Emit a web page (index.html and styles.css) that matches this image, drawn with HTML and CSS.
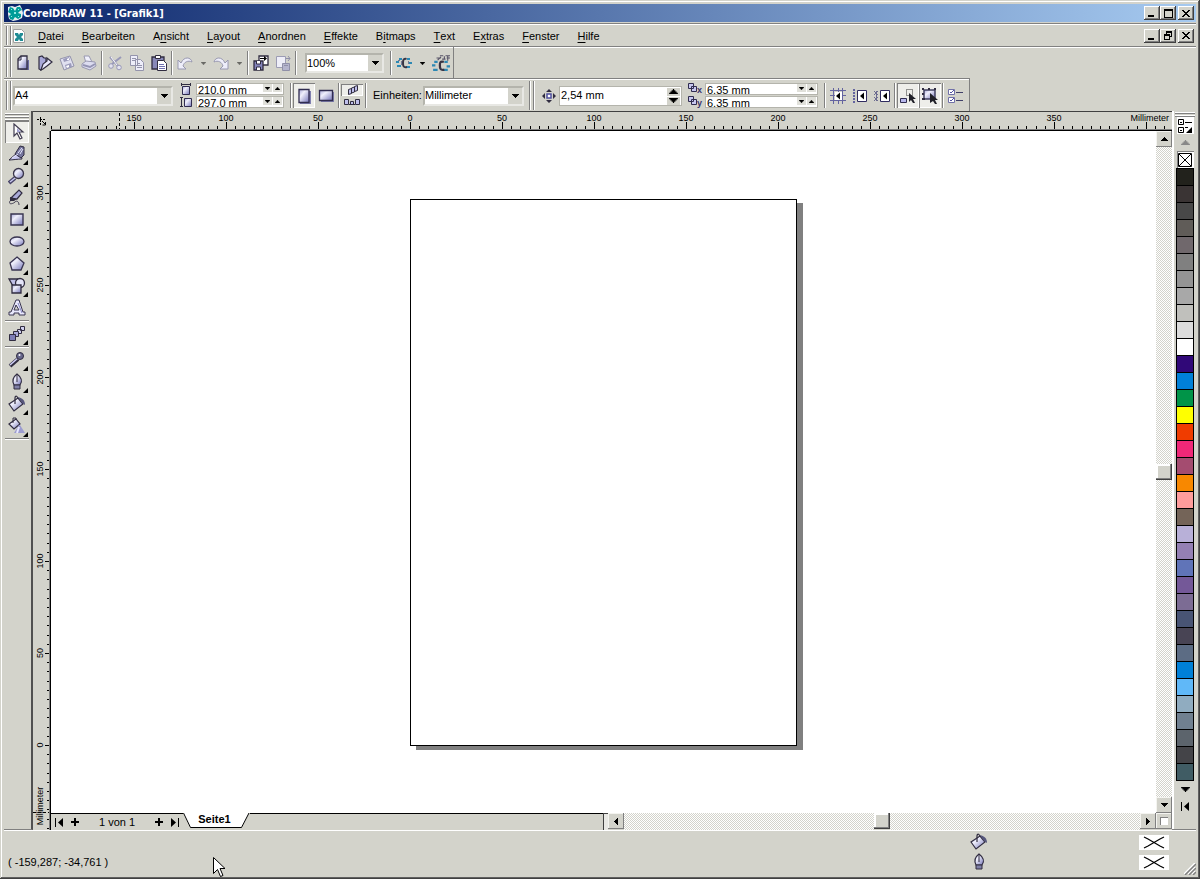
FILE: index.html
```html
<!DOCTYPE html>
<html lang="de">
<head>
<meta charset="utf-8">
<title>CorelDRAW 11 - [Grafik1]</title>
<link rel="stylesheet" href="styles.css">
</head>
<body>
<svg class="defs" width="0" height="0" aria-hidden="true">
  <defs>
    <linearGradient id="lav" x1="0" y1="0" x2="1" y2="1"><stop offset="0" stop-color="#a8a8d8"/><stop offset=".35" stop-color="#f0f0fc"/><stop offset="1" stop-color="#7474b8"/></linearGradient>
    <pattern id="hticks" x="83" y="0" width="92" height="19" patternUnits="userSpaceOnUse"><path d="M0 10h1v7h-1zM9 14h1v3h-1zM18 14h1v3h-1zM28 14h1v3h-1zM37 14h1v3h-1zM46 14h1v3h-1zM55 14h1v3h-1zM64 14h1v3h-1zM74 14h1v3h-1zM83 14h1v3h-1z"/></pattern>
    <pattern id="vticks" x="0" y="62" width="18" height="92" patternUnits="userSpaceOnUse"><path d="M12 0h4v1h-4zM14 9h2v1h-2zM14 18h2v1h-2zM14 28h2v1h-2zM14 37h2v1h-2zM14 46h2v1h-2zM14 55h2v1h-2zM14 64h2v1h-2zM14 74h2v1h-2zM14 83h2v1h-2z"/></pattern>
    <symbol id="dn" viewBox="0 0 7 4"><path d="M0 0h7v1h-1v1h-1v1h-1v1h-1v-1h-1v-1h-1v-1h-1z"/></symbol>
    <symbol id="up" viewBox="0 0 7 4"><path d="M0 4h7v-1h-1v-1h-1v-1h-1v-1h-1v1h-1v1h-1v1h-1z"/></symbol>
    <symbol id="lt" viewBox="0 0 4 7"><path d="M4 0v7h-1v-1h-1v-1h-1v-1h-1v-1h1v-1h1v-1h1v-1z"/></symbol>
    <symbol id="rt" viewBox="0 0 4 7"><path d="M0 0v7h1v-1h1v-1h1v-1h1v-1h-1v-1h-1v-1h-1v-1z"/></symbol>
    <symbol id="x" viewBox="0 0 8 7"><path d="M0 0h2v1h1v1h2v-1h1v-1h2v1h-1v1h-1v1h-1v1h1v1h1v1h1v1h-2v-1h-1v-1h-2v1h-1v1h-2v-1h1v-1h1v-1h1v-1h-1v-1h-1v-1h-1z"/></symbol>
    <symbol id="logo" viewBox="0 0 16 16"><path fill="#e8f0f0" d="M1 2l4-1 3 1 5-2 2 4 1 4-1 5-4 2-5 1-4-2-1-5z"/><path fill="#009c98" d="M3 2l3 1 2 3 2-4 3 0 2 3-2 1-2 2 3 1 0 3-3 2-3-2-2 3-3-1-1-3 2-2-3-2z"/><path fill="#90ece4" d="M7 7l2 0 0 2-2 0zM4 4l1 0 0 1-1 0zM11 11l1 0 0 1-1 0zM11 4h1v1h-1zM4 11h1v1H4z"/></symbol>
    <symbol id="doc" viewBox="0 0 12 14"><path fill="#fff" stroke="#a0a0a0" d="M.5.5h8l3 3v10h-11z"/><path fill="#208c94" d="M2 4h3l1 2 1-2h3v2L8 8l2 2v2H7L6 10l-1 2H2v-2l2-2-2-2z"/></symbol>

    <symbol id="new" viewBox="0 0 16 16"><path fill="#6c6ca0" d="M5 15h9V5h-1z"/><path fill="url(#lav)" stroke="#302c40" stroke-width="1.3" d="M3 4l3-3h6v13H3z"/><path fill="none" stroke="#302c40" d="M3 5h3V1"/></symbol>
    <symbol id="open" viewBox="0 0 16 16"><path fill="#a8a8d8" stroke="#302c40" stroke-width="1.2" d="M2 14V2l3-1 2 2h2v4l-3 4-2 4z"/><path fill="#e8e8fc" stroke="#302c40" stroke-width="1.2" d="M4 15l2-6 4-3V3l5 4-5 4-4 3z"/></symbol>
    <symbol id="save" viewBox="0 0 16 16"><path fill="#e0e0f0" stroke="#9494ac" d="M1 4l10-3 4 10-10 4z"/><path fill="#9c9cbc" d="M4 4l6-2 1 3-6 2zM6 10l6-2 1 4-6 2z"/><path fill="#fff" d="M8 4l2-1v2l-2 0zM7 11l3-1v2l-2 1z"/></symbol>
    <symbol id="print" viewBox="0 0 16 16"><path fill="#f0f0fc" stroke="#9898b0" d="M3 1h5l3 6-6 1z"/><path fill="#dcdcf0" stroke="#9898b0" d="M1 9l4-3 9 1 1 4-6 4-8-3z"/><path fill="none" stroke="#9494b4" stroke-width="2" d="M2 10l7 2 5-3"/></symbol>
    <symbol id="cut" viewBox="0 0 16 16"><path fill="none" stroke="#9898b8" stroke-width="2" d="M14 2L5 9M12 12L3 2"/><circle cx="4" cy="11" r="2.3" fill="#e4e4f0" stroke="#9898b8"/><circle cx="12" cy="12.500" r="2.300" fill="#e4e4f0" stroke="#9898b8"/><path stroke="#fff" d="M4 2l6 8"/></symbol>
    <symbol id="copy" viewBox="0 0 16 16"><g fill="#eeeefa" stroke="#9494ac"><path d="M1.500.5h7v10h-7zM6.500 4.500h5l3 3v8h-8z"/><path d="M3 3.500h4M3 5.500h3M8 8.500h3M8 10.500h5M8 12.500h5"/></g></symbol>
    <symbol id="paste" viewBox="0 0 16 16"><path fill="#8888b8" stroke="#302c40" stroke-width="1.3" d="M1 2h12v12H1z"/><path fill="#fff" stroke="#302c40" d="M4.500.5h5v3h-5zM6.500 5.500h6l3 3v7h-9z"/><path stroke="#7070b0" d="M8 9.500h5M8 11.500h6M8 13.500h6"/></symbol>
    <symbol id="undo" viewBox="0 0 16 16"><path fill="#eeeefa" stroke="#9898b0" d="M1 5v9h8l-3-3c1-4 5-6 9-4-1-5-8-6-11 1z"/></symbol>
    <symbol id="redo" viewBox="0 0 16 16"><path fill="#eeeefa" stroke="#9898b0" d="M15 5v9H7l3-3C9 7 5 5 1 7c1-5 8-6 11 1z"/></symbol>
    <symbol id="import" viewBox="0 0 16 16"><path fill="#fff" stroke="#302c40" stroke-width="1.3" d="M6 1h9v9H6z"/><path fill="#8484bc" stroke="#302c40" stroke-width="1.3" d="M1 6h9v9H1z"/><path fill="#fff" stroke="#302c40" d="M3.500 6v3h4V6M3.500 15v-3h4v3"/><path d="M7 3h4V1l3 2.500L11 6V4H7z"/></symbol>
    <symbol id="export" viewBox="0 0 16 16"><path fill="#eeeef8" stroke="#9c9cb4" d="M1.500 1.500h9v11h-9z"/><path fill="#b4b4cc" stroke="#9090a8" d="M7.500 8.500h7v7h-7z"/><path fill="none" stroke="#9090a8" d="M9 10.500h4M11 3.500h4M13 1l2 2.500L13 6"/></symbol>
    <symbol id="graph" viewBox="0 0 16 16"><path fill="#2c88b4" d="M3 3h3v2H3zM0 6h3v2H0zM1 10h4v2H1zM11 3h3v2h-3zM13 7h3v2h-3zM10 11h4v2h-4z"/><path fill="#747894" d="M5 6h1v4H5zM12 6h1v3h-1zM2 5h2v1H2z"/><path fill="none" stroke="#383444" stroke-width="2" d="M10.500 4C7 3 7 6 7 8s0 5 4 4"/></symbol>
    <symbol id="online" viewBox="0 0 16 16"><path fill="#2c88b4" d="M2 6h3v2H2zM0 9h3v2H0zM1 13h4v2H1zM11 6h3v2h-3zM13 10h3v2h-3zM10 13h4v2h-4z"/><path fill="none" stroke="#383444" stroke-width="2" d="M10.500 7C7 6 7 8 7 10s0 5 4 4"/><path fill="none" stroke="#585468" d="M4 3.500h4M7 1.500h3M12 1.500h4M5 5.500l3-3M9 4.500h3M13 3.500h3M11 2v3M14 2v4"/></symbol>

    <symbol id="pw" viewBox="0 0 12 12"><path fill="url(#lav)" stroke="#302c50" d="M2.500 3.500h7v8h-7z"/><path stroke="#302c40" d="M1 1.500h10M1.500 0v3M10.500 0v3"/></symbol>
    <symbol id="ph" viewBox="0 0 12 12"><path fill="url(#lav)" stroke="#302c50" d="M4.500 2.500h7v8h-7z"/><path stroke="#302c40" d="M1.500 1v10M0 1.500h3M0 10.500h3"/></symbol>
    <symbol id="portrait" viewBox="0 0 16 16"><path fill="#8080b0" d="M4 3h11v13H4z"/><path fill="url(#lav)" stroke="#302c50" stroke-width="1.300" d="M3 1.500h10v13H3z"/></symbol>
    <symbol id="landscape" viewBox="0 0 16 16"><path fill="#8080b0" d="M3 4h13v10H3z"/><path fill="url(#lav)" stroke="#302c50" stroke-width="1.300" d="M1.500 2.500h13v10h-13z"/></symbol>
    <symbol id="multi" viewBox="0 0 16 10"><path fill="#c0c0ec" stroke="#302c40" d="M4.500 4.500l3-1v5l-3 1zM7.500 3l3-1v5l-3 1zM10.500 1.500l3-1v5l-3 1z"/></symbol>
    <symbol id="cur" viewBox="0 0 16 10"><path fill="#c0c0ec" stroke="#302c40" d="M.5 2.500h4v5h-4zM6.500 4.500h3v3h-3zM11.500 2.500h4v5h-4z"/><path stroke="#302c40" d="M5 7.500h6"/></symbol>
    <symbol id="nudge" viewBox="0 0 14 14"><path fill="#fff" stroke="#5050a0" stroke-width="1.500" d="M5 5h4v4H5z"/><path fill="#302c40" d="M7 0l3 3H4zM7 14l3-3H4zM0 7l3-3v6zM14 7l-3-3v6z"/></symbol>
    <symbol id="dup" viewBox="0 0 9 9"><path fill="#c8c8f0" stroke="#302c50" d="M3.500 3.500h5v5h-5zM.5.5h5v5h-5z"/></symbol>
    <symbol id="sgrid" viewBox="0 0 16 16"><path fill="none" stroke="#6464a0" d="M0 2.500h16M0 7.500h16M0 12.500h16M3.500 0v16M8.500 0v16M12.500 0v16"/><path fill="#fff" d="M5 4h7v8H5z"/><path d="M10 4.500v7L6 8z"/></symbol>
    <symbol id="sguide" viewBox="0 0 16 16"><path stroke="#6464a0" stroke-width="2" stroke-dasharray="2 1" d="M2 1v14"/><path fill="#fff" stroke="#302c60" d="M5.500 2.500h9v11h-9z"/><path d="M12 4.500v7L8 8z"/></symbol>
    <symbol id="sobj" viewBox="0 0 16 16"><path stroke="#6c6c90" fill="none" d="M0 3l4 4M4 3L0 7M0 9l4 4M4 9l-4 4M2.500 3v10"/><path fill="#fff" stroke="#302c60" d="M6.500 2.500h9v11h-9z"/><path d="M13 4.500v7L9 8z"/></symbol>
    <symbol id="seldash" viewBox="0 0 16 16"><path fill="none" stroke="#333" stroke-dasharray="1 1" d="M6.500 1.500h6v6h-6z"/><path fill="#b8b8ec" stroke="#302c50" d="M.5 10.500h6v4h-6z"/><path fill="#202028" d="M9 5l7 6h-3l2 4h-2l-2-3-2 2z"/></symbol>
    <symbol id="selfill" viewBox="0 0 16 16"><path fill="url(#lav)" stroke="#404060" stroke-width="1.500" d="M2 2h11v9H2z"/><path fill="#302c40" d="M0 0h2v2H0zM6 0h2v2H6zM12 0h2v2h-2zM0 10h3v2H0zM0 5h2v2H0z"/><path fill="#202028" d="M8 5l8 7h-3l2 4h-2l-2-3-3 2z"/></symbol>
    <symbol id="opts" viewBox="0 0 16 16"><path fill="#fff" stroke="#7070a8" d="M.5 1.500h6v5h-6zM.5 9.500h6v5h-6z"/><path fill="none" stroke="#5050a0" d="M2 4l1 1 3-3M2 12l1 1 3-3"/><path stroke="#404068" d="M8 4.500h7M8 12.500h7"/></symbol>

    <symbol id="t-pick" viewBox="0 0 18 18"><path fill="#fff" stroke="#403c50" stroke-width="1.200" d="M6 1v12l3-3 3 6 2-1-3-6h4z"/><path fill="#a0a0d0" d="M9 5l4 4H9z"/></symbol>
    <symbol id="t-shape" viewBox="0 0 18 18"><path fill="#c8c8f0" stroke="#302c40" d="M1 15c3 0 9-1 13-1l-1-5-3-2z"/><path fill="#74749c" stroke="#302c40" d="M7 9l5-8 4 1v8l-3 3z"/><path stroke="#e8e8ff" d="M4 13l6-4M10 8l4-5M12 9l3-5"/></symbol>
    <symbol id="t-zoom" viewBox="0 0 18 18"><path stroke="#484468" stroke-width="4" d="M1 16l6-5"/><path stroke="#c8c8f0" stroke-width="1.500" d="M2 15l5-4"/><circle cx="10.500" cy="6.500" r="5" fill="url(#lav)" stroke="#383448" stroke-width="1.300"/></symbol>
    <symbol id="t-free" viewBox="0 0 18 18"><path fill="#aaaad8" stroke="#302c40" stroke-width="1.200" d="M3 9l8-8 3 3-5 6z"/><path fill="#302c40" d="M2 8l7 2-3 2-4 0z"/><path fill="none" stroke="#403c50" d="M2 12c-2 4 3 3 5 1s4 0 4 3"/></symbol>
    <symbol id="t-rect" viewBox="0 0 18 18"><path fill="url(#lav)" stroke="#383450" stroke-width="1.400" d="M3 3h12v11H3z"/></symbol>
    <symbol id="t-ell" viewBox="0 0 18 18"><ellipse cx="9" cy="8.500" rx="7" ry="4.500" fill="url(#lav)" stroke="#383450" stroke-width="1.300"/></symbol>
    <symbol id="t-poly" viewBox="0 0 18 18"><path fill="url(#lav)" stroke="#383450" stroke-width="1.300" d="M9 2l7 6-3 7H4L2 8z"/></symbol>
    <symbol id="t-basic" viewBox="0 0 18 18"><g stroke="#302c40" stroke-width="1.300"><path fill="#c0c0e8" d="M1 2h9v7H5z"/><circle cx="12" cy="6" r="4.500" fill="#e4e4f8"/><path fill="url(#lav)" d="M4 8h9v8H4z"/></g></symbol>
    <symbol id="t-text" viewBox="0 0 18 18"><path fill="#e8e8fc" stroke="#383450" fill-rule="evenodd" d="M8 1h3l4 12h2v3h-6v-2H6v2H1v-3h2zM8 6l-2 5h5z"/><path stroke="#8888c4" d="M10 4l4 10"/></symbol>
    <symbol id="t-blend" viewBox="0 0 18 18"><g fill="#d0d0f0" stroke="#302c40"><path d="M12.500 1.500h4v4h-4zM9.500 4.500h4v4h-4z"/><path fill="#a8a8d8" d="M5.500 6.500h5v5h-5z"/><path fill="#7c7cb4" d="M1.500 9.500h6v6h-6z"/></g></symbol>
    <symbol id="t-eye" viewBox="0 0 18 18"><path stroke="#302c40" stroke-width="4" d="M2 15l8-7"/><path stroke="#d0d0f8" stroke-width="1.500" d="M2 14l8-7"/><circle cx="12" cy="5" r="3.500" fill="#68688c" stroke="#302c40"/><circle cx="11.500" cy="4" r="1" fill="#fff"/></symbol>
    <symbol id="t-pen" viewBox="0 0 18 18"><path fill="url(#lav)" stroke="#302c40" stroke-width="1.200" d="M9 1c4 3 6 7 3 11H6C4 8 5 4 9 1z"/><path fill="#8080a8" stroke="#302c40" d="M6 12h6v4H6z"/><path stroke="#302c40" d="M9 1v8"/></symbol>
    <symbol id="t-fill" viewBox="0 0 18 18"><path fill="url(#lav)" stroke="#302c40" stroke-width="1.200" d="M1 9l9-6 5 6-9 7z"/><path fill="none" stroke="#302c40" stroke-width="1.200" d="M7 9V3c0-3 3-2 3 1"/><path fill="#56567c" d="M10 2c4 1 7 3 7 8l-3-2z"/></symbol>
    <symbol id="t-ifill" viewBox="0 0 18 18"><path fill="url(#lav)" stroke="#302c40" stroke-width="1.200" d="M1 7l7-5 4 5-6 5z"/><path fill="none" stroke="#302c40" d="M5 6V1h3v2"/><path fill="#9c9cd0" d="M11 8h1l5 8H6z"/><path stroke="#e8e8ff" stroke-width="2" d="M11 10l-2 6"/></symbol>
    <symbol id="cross" viewBox="0 0 30 15"><path fill="#fff" d="M0 0h30v15H0z"/><path fill="none" stroke="#000" stroke-width="1.200" d="M5 2l4 2 12 7 4 2M25 2l-4 2-12 7-4 2"/></symbol>
  </defs>
</svg>

<div class="window">
  <header class="titlebar">
    <svg class="i16"><use href="#logo"/></svg>
    <h1>CorelDRAW 11 - [Grafik1]</h1>
    <button class="wbtn" aria-label="Minimieren"><svg width="8" height="8"><path d="M0 6h6v2H0z"/></svg></button>
    <button class="wbtn" aria-label="Maximieren"><svg width="9" height="9"><path fill-rule="evenodd" d="M0 0h9v9H0zM1 2v6h7V2z"/></svg></button>
    <button class="wbtn close" aria-label="Schließen"><svg width="8" height="7"><use href="#x"/></svg></button>
  </header>

  <nav class="menubar">
    <span class="grip"></span>
    <svg class="docicon" width="12" height="14"><use href="#doc"/></svg>
    <div class="menus">
      <button><u>D</u>atei</button><button><u>B</u>earbeiten</button><button>A<u>n</u>sicht</button><button><u>L</u>ayout</button><button><u>A</u>nordnen</button><button><u>E</u>ffekte</button><button>B<u>i</u>tmaps</button><button><u>T</u>ext</button><button>E<u>x</u>tras</button><button><u>F</u>enster</button><button><u>H</u>ilfe</button>
    </div>
    <button class="wbtn" aria-label="Dokument minimieren"><svg width="8" height="8"><path d="M0 6h6v2H0z"/></svg></button>
    <button class="wbtn" aria-label="Dokument wiederherstellen"><svg width="8" height="9"><path fill-rule="evenodd" d="M2 0h6v6H6v3H0V3h2zM3 2v1h3v2h1V2zM1 5v3h4V5z"/></svg></button>
    <button class="wbtn close" aria-label="Dokument schließen"><svg width="8" height="7"><use href="#x"/></svg></button>
  </nav>

  <div class="toolbar standard">
    <span class="grip"></span>
    <button class="tb" aria-label="Neu"><svg class="i16"><use href="#new"/></svg></button>
    <button class="tb" aria-label="Öffnen"><svg class="i16"><use href="#open"/></svg></button>
    <button class="tb" aria-label="Speichern"><svg class="i16"><use href="#save"/></svg></button>
    <button class="tb" aria-label="Drucken"><svg class="i16"><use href="#print"/></svg></button>
    <span class="sep"></span>
    <button class="tb" aria-label="Ausschneiden"><svg class="i16"><use href="#cut"/></svg></button>
    <button class="tb" aria-label="Kopieren"><svg class="i16"><use href="#copy"/></svg></button>
    <button class="tb" aria-label="Einfügen"><svg class="i16"><use href="#paste"/></svg></button>
    <span class="sep"></span>
    <button class="tb" aria-label="Rückgängig"><svg class="i16"><use href="#undo"/></svg></button>
    <button class="drop dim" aria-label="Rückgängig-Liste"><svg width="5" height="3"><use href="#dn"/></svg></button>
    <button class="tb" aria-label="Wiederherstellen"><svg class="i16"><use href="#redo"/></svg></button>
    <button class="drop dim" aria-label="Wiederherstellen-Liste"><svg width="5" height="3"><use href="#dn"/></svg></button>
    <span class="sep"></span>
    <button class="tb" aria-label="Importieren"><svg class="i16"><use href="#import"/></svg></button>
    <button class="tb" aria-label="Exportieren"><svg class="i16"><use href="#export"/></svg></button>
    <span class="sep"></span>
    <span class="combo zoomlevel"><select aria-label="Zoomstufe"><option>100%</option></select><i><svg width="7" height="4"><use href="#dn"/></svg></i></span>
    <span class="sep"></span>
    <button class="tb" aria-label="Anwendungsstarter"><svg class="i16"><use href="#graph"/></svg></button>
    <button class="drop" aria-label="Starterliste"><svg width="5" height="3"><use href="#dn"/></svg></button>
    <button class="tb online" aria-label="Corel Online"><svg class="i18"><use href="#online"/></svg></button>
  </div>

  <div class="toolbar property">
    <span class="grip"></span>
    <span class="combo paper"><select aria-label="Papiertyp"><option>A4</option></select><i><svg width="7" height="4"><use href="#dn"/></svg></i></span>
    <div class="pair size">
      <label><svg width="12" height="12"><use href="#pw"/></svg><span class="spin small"><input aria-label="Papierbreite" value="210.0 mm"><button aria-label="Weniger"><svg width="5" height="3"><use href="#dn"/></svg></button><button aria-label="Mehr"><svg width="5" height="3"><use href="#up"/></svg></button></span></label>
      <label><svg width="12" height="12"><use href="#ph"/></svg><span class="spin small"><input aria-label="Papierhöhe" value="297.0 mm"><button aria-label="Weniger"><svg width="5" height="3"><use href="#dn"/></svg></button><button aria-label="Mehr"><svg width="5" height="3"><use href="#up"/></svg></button></span></label>
    </div>
    <span class="sep"></span>
    <button class="tb on" aria-label="Hochformat"><svg class="i16"><use href="#portrait"/></svg></button>
    <button class="tb" aria-label="Querformat"><svg class="i16"><use href="#landscape"/></svg></button>
    <span class="sep"></span>
    <div class="pages">
      <button class="on" aria-label="Alle Seiten"><svg width="16" height="10"><use href="#multi"/></svg></button>
      <button aria-label="Aktuelle Seite"><svg width="16" height="10"><use href="#cur"/></svg></button>
    </div>
    <span class="sep"></span>
    <label class="unitlabel" for="units">Einheiten:</label>
    <span class="combo units"><select id="units"><option>Millimeter</option></select><i><svg width="7" height="4"><use href="#dn"/></svg></i></span>
    <span class="grip second"></span>
    <svg class="nudgeicon" width="14" height="14"><use href="#nudge"/></svg>
    <span class="spin large"><input aria-label="Schrittweite" value="2,54 mm"><span><button aria-label="Mehr"><svg width="9" height="5"><use href="#up"/></svg></button><button aria-label="Weniger"><svg width="9" height="5"><use href="#dn"/></svg></button></span></span>
    <div class="pair dist">
      <label><span class="axis"><svg width="9" height="9"><use href="#dup"/></svg><b>x</b></span><span class="spin small"><input aria-label="Duplikatabstand x" value="6.35 mm"><button aria-label="Weniger"><svg width="5" height="3"><use href="#dn"/></svg></button><button aria-label="Mehr"><svg width="5" height="3"><use href="#up"/></svg></button></span></label>
      <label><span class="axis"><svg width="9" height="9"><use href="#dup"/></svg><b>y</b></span><span class="spin small"><input aria-label="Duplikatabstand y" value="6.35 mm"><button aria-label="Weniger"><svg width="5" height="3"><use href="#dn"/></svg></button><button aria-label="Mehr"><svg width="5" height="3"><use href="#up"/></svg></button></span></label>
    </div>
    <span class="sep wide"></span>
    <button class="tb" aria-label="Am Gitter ausrichten"><svg class="i16"><use href="#sgrid"/></svg></button>
    <button class="tb" aria-label="An Hilfslinien ausrichten"><svg class="i16"><use href="#sguide"/></svg></button>
    <button class="tb" aria-label="An Objekten ausrichten"><svg class="i16"><use href="#sobj"/></svg></button>
    <span class="sep"></span>
    <button class="tb on" aria-label="Komplexe Objekte zeichnen"><svg class="i16"><use href="#seldash"/></svg></button>
    <button class="tb on" aria-label="Als gefüllt behandeln"><svg class="i16"><use href="#selfill"/></svg></button>
    <span class="sep"></span>
    <button class="tb" aria-label="Optionen"><svg class="i16"><use href="#opts"/></svg></button>
  </div>

  <main class="work">
    <aside class="toolbox">
      <span class="hgrip"></span>
      <button class="tool on" aria-label="Auswahl"><svg class="i18"><use href="#t-pick"/></svg></button>
      <button class="tool fly" aria-label="Form"><svg class="i18"><use href="#t-shape"/></svg></button>
      <button class="tool fly" aria-label="Zoom"><svg class="i18"><use href="#t-zoom"/></svg></button>
      <button class="tool fly" aria-label="Freihand"><svg class="i18"><use href="#t-free"/></svg></button>
      <button class="tool fly" aria-label="Rechteck"><svg class="i18"><use href="#t-rect"/></svg></button>
      <button class="tool fly" aria-label="Ellipse"><svg class="i18"><use href="#t-ell"/></svg></button>
      <button class="tool fly" aria-label="Polygon"><svg class="i18"><use href="#t-poly"/></svg></button>
      <button class="tool fly" aria-label="Standardformen"><svg class="i18"><use href="#t-basic"/></svg></button>
      <button class="tool" aria-label="Text"><svg class="i18"><use href="#t-text"/></svg></button>
      <hr>
      <button class="tool fly" aria-label="Überblendung"><svg class="i18"><use href="#t-blend"/></svg></button>
      <hr>
      <button class="tool fly" aria-label="Pipette"><svg class="i18"><use href="#t-eye"/></svg></button>
      <button class="tool fly" aria-label="Umriss"><svg class="i18"><use href="#t-pen"/></svg></button>
      <button class="tool fly" aria-label="Füllung"><svg class="i18"><use href="#t-fill"/></svg></button>
      <button class="tool fly" aria-label="Interaktive Füllung"><svg class="i18"><use href="#t-ifill"/></svg></button>
      <hr>
    </aside>

    <section class="document">
      <svg class="corner"><path fill="none" stroke="#000" stroke-dasharray="2 1" d="M4 7.500h8M7.500 5v9"/><path fill="none" stroke="#000" d="M9 9l3 3M12.500 10v3h-3"/></svg>
      <svg class="hruler">
        <rect width="100%" height="19" fill="url(#hticks)"/>
        <path stroke="#000" stroke-dasharray="3 2" d="M68.500 1v16"/>
        <g text-anchor="middle"><text x="83" y="9">150</text><text x="175" y="9">100</text><text x="267" y="9">50</text><text x="359" y="9">0</text><text x="451" y="9">50</text><text x="543" y="9">100</text><text x="635" y="9">150</text><text x="727" y="9">200</text><text x="819" y="9">250</text><text x="911" y="9">300</text><text x="1003" y="9">350</text></g>
        <text x="100%" dx="-3" y="9" text-anchor="end">Millimeter</text>
      </svg>
      <svg class="vruler">
        <rect width="18" height="100%" fill="url(#vticks)"/>
        <path stroke="#000" stroke-dasharray="3 2" d="M0 681.500h16"/>
        <g text-anchor="middle"><text transform="translate(10 62) rotate(-90)">300</text><text transform="translate(10 154) rotate(-90)">250</text><text transform="translate(10 246) rotate(-90)">200</text><text transform="translate(10 338) rotate(-90)">150</text><text transform="translate(10 430) rotate(-90)">100</text><text transform="translate(10 522) rotate(-90)">50</text><text transform="translate(10 614) rotate(-90)">0</text><text transform="translate(10 675) rotate(-90)">Millimeter</text></g>
      </svg>
      <div class="canvas"><div class="page"></div></div>
      <div class="vscroll">
        <button class="sb" aria-label="Nach oben"><svg width="7" height="4"><use href="#up"/></svg></button>
        <span class="track"></span><span class="thumb"></span><span class="track"></span>
        <button class="sb" aria-label="Nach unten"><svg width="7" height="4"><use href="#dn"/></svg></button>
      </div>
      <div class="bottom">
        <div class="nav">
          <button aria-label="Erste Seite"><svg width="8" height="9"><path d="M0 0h1v9H0zM8 0v9L3 4.500z"/></svg></button>
          <button aria-label="Seite davor einfügen"><svg width="8" height="8"><path d="M3 0h2v3h3v2H5v3H3V5H0V3h3z"/></svg></button>
          <span class="count">1 von 1</span>
          <button aria-label="Seite danach einfügen"><svg width="8" height="8"><path d="M3 0h2v3h3v2H5v3H3V5H0V3h3z"/></svg></button>
          <button aria-label="Letzte Seite"><svg width="8" height="9"><path d="M7 0h1v9H7zM0 0v9l5-4.500z"/></svg></button>
        </div>
        <button class="tab"><svg width="67" height="15"><path fill="#fff" d="M0 0l7 14h52l7-14z"/><path fill="none" stroke="#000" d="M.5 0l7 14.500h51L66 0"/></svg><span>Seite1</span></button>
        <span class="rest"></span>
        <span class="split"></span>
        <div class="hscroll">
          <button class="sb" aria-label="Nach links"><svg width="4" height="7"><use href="#lt"/></svg></button>
          <span class="track"></span><span class="thumb"></span><span class="track"></span>
          <button class="sb" aria-label="Nach rechts"><svg width="4" height="7"><use href="#rt"/></svg></button>
        </div>
      </div>
      <button class="navsq" aria-label="Navigator"><i></i></button>
    </section>

    <aside class="palette">
      <span class="hgrip"></span>
      <button class="palmenu" aria-label="Palettenmenü"><svg width="14" height="14"><path fill="none" stroke="#000" d="M.5.5h5v5h-5zM.5 8.500h5v5h-5zM7 3.500h7M7 8.500h3M2 3.500h2M2 11.500h2"/><path d="M14 8v6H8z"/></svg></button>
      <button class="arrow" aria-label="Palette nach oben"><svg width="9" height="5" fill="#888"><use href="#up"/></svg></button>
      <button class="none" aria-label="Keine Farbe"><svg width="14" height="14"><path fill="none" stroke="#000" d="M.5.5h13v13H.5zM1 1l12 12M13 1L1 13"/></svg></button>
      <div class="swatches">
        <button style="background:#22221c"></button><button style="background:#3a3434"></button><button style="background:#484848"></button><button style="background:#605c58"></button><button style="background:#70686c"></button><button style="background:#808080"></button><button style="background:#949494"></button><button style="background:#a8a8a8"></button><button style="background:#c0c0bc"></button><button style="background:#dcdcdc"></button><button style="background:#ffffff"></button><button style="background:#300878"></button><button style="background:#0080d8"></button><button style="background:#009448"></button><button style="background:#ffff00"></button><button style="background:#f03c00"></button><button style="background:#f02878"></button><button style="background:#a44c70"></button><button style="background:#f88800"></button><button style="background:#ff9c9c"></button><button style="background:#746458"></button><button style="background:#b8b0d8"></button><button style="background:#9480b4"></button><button style="background:#6074b8"></button><button style="background:#745898"></button><button style="background:#7c6c94"></button><button style="background:#485474"></button><button style="background:#484454"></button><button style="background:#5c6c84"></button><button style="background:#0080d8"></button><button style="background:#60b8f8"></button><button style="background:#90acc0"></button><button style="background:#708090"></button><button style="background:#5c646c"></button><button style="background:#444448"></button><button style="background:#405c64"></button>
      </div>
      <button class="arrow" aria-label="Palette nach unten"><svg width="9" height="5"><use href="#dn"/></svg></button>
      <button class="arrow" aria-label="Palette erweitern"><svg width="8" height="9"><path d="M0 0h1v9H0zM8 0v9L3 4.500z"/></svg></button>
    </aside>
  </main>

  <footer class="status">
    <p>( -159,287; -34,761 )</p>
    <div class="fillinfo">
      <div><svg class="i18"><use href="#t-fill"/></svg><svg width="30" height="15"><use href="#cross"/></svg></div>
      <div><svg class="i18"><use href="#t-pen"/></svg><svg width="30" height="15"><use href="#cross"/></svg></div>
    </div>
    <svg class="resize" width="12" height="12"><path stroke="#fff" stroke-width="1.500" d="M0 11L11 0M4 11l7-7M8 11l3-3"/><path stroke="#808080" stroke-width="1.500" d="M1 12L12 1M5 12l7-7M9 12l3-3"/></svg>
  </footer>
</div>
<svg class="pointer" width="13" height="21"><path fill="#fff" stroke="#000" d="M.5.5v16l4-4 3 7 2.500-1-3-7h5z"/></svg>
</body>
</html>
```
FILE: styles.css
```css
* { box-sizing: border-box; }

body {
  margin: 0;
  background: #d3d3cb;
  color: #000;
  font: 11px/13px "Liberation Sans", Arial, sans-serif;
}

svg { display: block; flex: none; }
.defs { position: absolute; }
.i16 { width: 16px; height: 16px; }
.i18 { width: 18px; height: 18px; }

button, input, select {
  margin: 0;
  padding: 0;
  border: 0;
  border-radius: 0;
  background: none;
  color: inherit;
  font: inherit;
}

button { display: flex; align-items: center; justify-content: center; flex: none; }
select, input { appearance: none; outline: 0; min-width: 0; }

.window {
  display: flex;
  flex-direction: column;
  min-height: 100vh;
  padding: 4px;
  box-shadow: inset -1px -1px #404040, inset 1px 1px #d3d3cb, inset -2px -2px #606060, inset 2px 2px #fff;
}

/* title and menu */
.titlebar {
  display: flex;
  align-items: center;
  height: 18px;
  margin-bottom: 1px;
  padding: 0 2px 0 3px;
  background: linear-gradient(90deg, #0a246a, #a6caf0);
}

.titlebar h1 {
  flex: 1;
  margin: 0;
  padding-top: 1px;
  color: #fff;
  font: bold 11px/14px "DejaVu Sans Condensed", "DejaVu Sans", sans-serif;
}

.wbtn {
  width: 16px;
  height: 14px;
  background: #d3d3cb;
  box-shadow: inset -1px -1px #404040, inset 1px 1px #fff, inset -2px -2px #808080;
}

.close { margin-left: 2px; }

.menubar {
  display: flex;
  align-items: center;
  height: 24px;
  padding: 1px 2px 0;
  border-top: 1px solid #808080;
  border-bottom: 1px solid #808080;
  box-shadow: inset 0 1px #fff, 0 1px #fff;
}

.grip {
  align-self: stretch;
  flex: none;
  width: 5px;
  margin: 1px 0;
  border: solid #808080;
  border-width: 0 1px;
  box-shadow: inset 1px 0 #fff, 1px 0 #fff;
}

.docicon { margin: 0 13px 0 2px; }
.menus { display: flex; flex: 1; gap: 18px; padding-top: 2px; }
.menus u { text-underline-offset: 2px; }

/* toolbars */
.toolbar {
  display: flex;
  align-items: center;
  align-self: flex-start;
  padding: 1px 2px 0;
  border-right: 1px solid #808080;
}

.standard { height: 31px; padding-right: 0; }

.property {
  height: 33px;
  border-top: 1px solid #808080;
  box-shadow: inset 0 1px #fff;
}

.standard .grip + .tb { margin-left: 1px; }
.tb { width: 22px; height: 25px; }

.on {
  background: #eeeeea;
  box-shadow: inset 1px 1px #808080, inset -1px -1px #fff;
}

.sep {
  align-self: stretch;
  flex: none;
  width: 2px;
  margin: 3px 1px;
  background: linear-gradient(90deg, #808080 50%, #fff 50%);
}

.drop { width: 14px; height: 22px; }
.dim { opacity: .5; }
.online { width: 24px; }

.combo {
  display: flex;
  flex: none;
  height: 20px;
  border: 2px solid #b4b4ac;
  border-right-color: #e8e8e4;
  border-bottom-color: #e8e8e4;
  background: #fff;
}

.combo select { flex: 1; }

.combo i {
  display: flex;
  align-items: center;
  justify-content: center;
  width: 14px;
  background: #d3d3cb;
  pointer-events: none;
}

.zoomlevel { width: 79px; margin: 0 5px 0 7px; }
.paper { width: 160px; margin-left: 2px; }
.units { width: 101px; }
.unitlabel { width: 50px; margin-left: 5px; white-space: nowrap; }

.pair { display: flex; flex-direction: column; gap: 1px; }
.pair label { display: flex; align-items: center; gap: 4px; }
.size { margin: 0 5px 0 7px; }
.size .spin { width: 88px; }
.dist { margin-left: 6px; }
.dist .spin { width: 113px; }
.dist label { gap: 2px; }

.spin {
  display: flex;
  flex: none;
  overflow: hidden;
  border: 1px solid #b4b4ac;
  background: #fff;
}

.spin input { flex: 1; padding-left: 1px; }
.small { height: 12px; }
.small input { height: 13px; line-height: 13px; }
.small button { width: 9px; height: 8px; margin-right: 1px; background: #e0e0da; }
.large { width: 123px; height: 20px; }
.large button { width: 13px; height: 8px; margin: 1px; background: #d3d3cb; }

.pages { display: flex; flex-direction: column; width: 22px; margin-right: 1px; }
.pages button { height: 12px; }

.second { margin: 1px 8px 1px 5px; }
.nudgeicon { margin-right: 3px; }
.axis { display: flex; width: 15px; height: 12px; }
.axis b { align-self: flex-end; color: #38346c; font-size: 9px; line-height: 9px; }
.wide { margin-left: 6px; margin-right: 1px; }

/* work area */
.work { display: flex; flex: 1; }

.toolbox {
  display: flex;
  flex-direction: column;
  width: 29px;
  padding: 1px 2px 0 1px;
  border-right: 2px solid #505050;
  border-bottom: 1px solid #808080;
}

.hgrip {
  flex: none;
  height: 9px;
  background: repeating-linear-gradient(#d3d3cb 0 1px, #fff 1px 2px, #808080 2px 3px);
}

.tool { position: relative; width: 24px; height: 22px; }

.fly::after {
  content: "";
  position: absolute;
  right: 1px;
  bottom: 0;
  border-left: 5px solid transparent;
  border-bottom: 5px solid #000;
}

.toolbox hr {
  width: 24px;
  height: 2px;
  margin: 1px 0;
  border: 0;
  border-top: 1px solid #808080;
  background: #fff;
}

.document {
  display: grid;
  flex: 1;
  grid-template: 19px minmax(0, 1fr) 17px / 18px minmax(0, 1fr) 16px;
  min-width: 0;
  border-top: 1px solid #404040;
}

.corner { width: 18px; height: 19px; }

.hruler {
  grid-column: 2 / 4;
  width: 100%;
  height: 19px;
  border-bottom: 1px solid #000;
  background: linear-gradient(#808080, #808080) bottom / 100% 1px no-repeat;
}

.vruler {
  grid-row: 2 / 4;
  grid-column: 1;
  width: 18px;
  height: 100%;
  border-right: 1px solid #000;
  background: linear-gradient(#808080, #808080) right / 1px 100% no-repeat;
}

.hruler text, .vruler text { font-size: 9px; }
.hruler rect, .hruler path, .vruler rect, .vruler path { shape-rendering: crispEdges; }

.canvas { position: relative; overflow: hidden; background: #fff; }

.page {
  position: absolute;
  left: 359px;
  top: 68px;
  width: 387px;
  height: 547px;
  border: 1px solid #000;
  background: #fff;
  box-shadow: 6px 4px #808080;
}

.vscroll, .hscroll { display: flex; min-width: 0; }
.vscroll { flex-direction: column; }

.sb, .thumb, .navsq {
  flex: none;
  width: 16px;
  height: 16px;
  background: #d3d3cb;
  box-shadow: inset -1px -1px #808080, inset 1px 1px #f4f4f0;
}

.thumb { box-shadow: inset -1px -1px #404040, inset -2px -2px #808080, inset 2px 2px #fff; }

.track {
  flex: 1;
  background: repeating-conic-gradient(#d3d3cb 0 25%, #fff 0 50%) 0 0 / 2px 2px;
}

.bottom { display: flex; min-width: 0; }

.nav {
  display: flex;
  align-items: center;
  width: 132px;
  padding: 0 4px;
  border-top: 1px solid #000;
}

.nav button { width: 8px; }
.nav button + button { margin-left: 8px; }
.count { flex: 1; text-align: center; }
.tab { position: relative; align-items: flex-start; width: 67px; }

.tab span {
  position: absolute;
  inset: 0;
  padding-right: 4px;
  font-weight: bold;
}

.rest { flex: 353; border-top: 1px solid #000; }
.split { flex: none; width: 5px; background: #e8e8e4; border: solid #404040; border-width: 1px 0 0 1px; }
.hscroll { flex: 548; }
.navsq i { width: 8px; height: 8px; background: #fff; box-shadow: inset 1px 1px #808080; }

/* palette */
.palette {
  display: flex;
  flex-direction: column;
  align-items: center;
  width: 24px;
  padding: 0 1px 0 3px;
  border-bottom: 1px solid #808080;
  box-shadow: inset 2px 0 #fff;
}

.palette .hgrip { width: 100%; height: 6px; }
.palmenu { width: 17px; height: 17px; background: #fff; }
.palette .arrow { width: 17px; height: 17px; }
.none { width: 17px; height: 17px; background: #fff; box-shadow: inset 1px 1px #808080; }
.swatches { display: flex; flex-direction: column; border-bottom: 1px solid #000; }
.swatches button { width: 18px; height: 17px; border: solid #000; border-width: 1px 1px 0; }

/* status bar */
.status {
  display: flex;
  align-items: flex-end;
  height: 45px;
  padding-left: 4px;
  border-top: 1px solid #fff;
}

.status p { flex: 1; margin: 0 0 6px; }
.fillinfo { align-self: flex-start; padding-top: 1px; }
.fillinfo div { display: flex; align-items: center; gap: 151px; height: 20px; }
.resize { margin-left: 15px; }

.pointer { position: absolute; left: 213px; top: 857px; }
```
